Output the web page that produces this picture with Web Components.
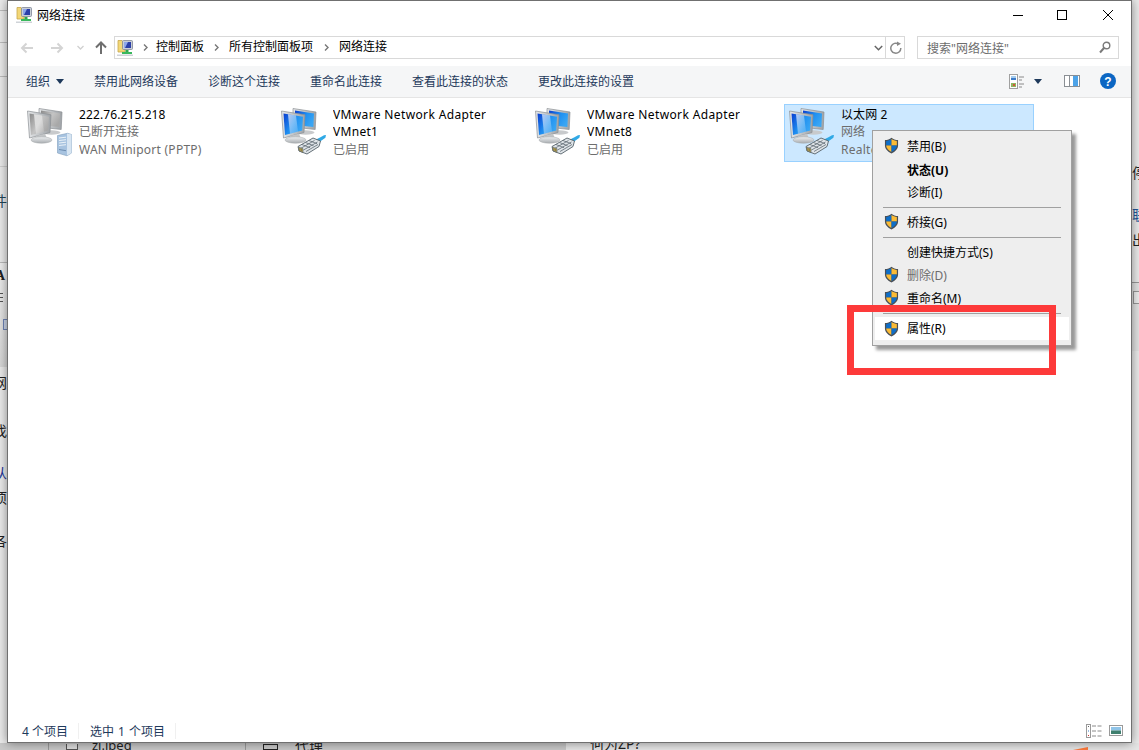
<!DOCTYPE html>
<html lang="zh-CN">
<head>
<meta charset="utf-8">
<title>网络连接</title>
<style>
html,body{margin:0;padding:0;width:1139px;height:750px;overflow:hidden;background:#ececec;font-family:"Noto Sans","Noto Sans CJK SC",sans-serif;font-size:12px}
</style>
</head>
<body>
<x-desktop>
  <x-window>
    <x-titlebar slot="title">网络连接</x-titlebar>
    <x-navbar slot="nav"></x-navbar>
    <x-toolbar slot="tools">
      <x-tool menu>组织</x-tool>
      <x-tool>禁用此网络设备</x-tool>
      <x-tool>诊断这个连接</x-tool>
      <x-tool>重命名此连接</x-tool>
      <x-tool>查看此连接的状态</x-tool>
      <x-tool>更改此连接的设置</x-tool>
    </x-toolbar>
    <x-conn-list slot="content">
      <x-conn kind="wan" name="222.76.215.218" l2="已断开连接" l3="WAN Miniport (PPTP)"></x-conn>
      <x-conn kind="lan" name="VMware Network Adapter VMnet1" l3="已启用"></x-conn>
      <x-conn kind="lan" name="VMware Network Adapter VMnet8" l3="已启用"></x-conn>
      <x-conn kind="lan" name="以太网 2" l2="网络" l3="Realtek PCIe GBE Family Controller" selected></x-conn>
    </x-conn-list>
    <x-statusbar slot="status"></x-statusbar>
  </x-window>
  <x-context-menu>
    <x-menu-item shield>禁用(B)</x-menu-item>
    <x-menu-item bold>状态(U)</x-menu-item>
    <x-menu-item>诊断(I)</x-menu-item>
    <x-menu-sep></x-menu-sep>
    <x-menu-item shield>桥接(G)</x-menu-item>
    <x-menu-sep></x-menu-sep>
    <x-menu-item>创建快捷方式(S)</x-menu-item>
    <x-menu-item shield disabled>删除(D)</x-menu-item>
    <x-menu-item shield>重命名(M)</x-menu-item>
    <x-menu-sep></x-menu-sep>
    <x-menu-item shield hot>属性(R)</x-menu-item>
  </x-context-menu>
  <x-redbox></x-redbox>
</x-desktop>

<script>
const SHIELD = `<svg width="15" height="17" viewBox="0 0 16 18" style="display:block">
<path d="M8 .6C6 2.300 3.800 3 1 3.100V9c0 3.800 3 6.500 7 8.400 4-1.900 7-4.600 7-8.400V3.100C12.200 3 10 2.300 8 .6Z" fill="#4a4f55"/>
<path d="M8 2.100C6.300 3.400 4.400 4 2.300 4.200V9H8Z" fill="#0e6ec8"/>
<path d="M8 2.100C9.700 3.400 11.600 4 13.700 4.200V9H8Z" fill="#fbbb35"/>
<path d="M2.300 9C2.500 12 4.800 14.300 8 15.900V9Z" fill="#fbbb35"/>
<path d="M13.700 9C13.500 12 11.200 14.300 8 15.900V9Z" fill="#0e6ec8"/></svg>`;

const FOLDER16 = `<svg width="18" height="18" viewBox="0 0 18 18" style="display:block">
<path d="M1 1.500h4l1 1.500h2v10H1Z" fill="#f3d777" stroke="#c6a74d" stroke-width=".8"/>
<rect x="5.500" y="1.500" width="10" height="9" rx="1" fill="#c9ced6" stroke="#7f8796" stroke-width=".8"/>
<rect x="7" y="3" width="7" height="6" fill="#2b3fa8"/><path d="M7 3h4L8 9H7Z" fill="#8ea7ea"/>
<rect x="8.500" y="11" width="3" height="2.500" fill="#2fa84f"/>
<rect x="5" y="13" width="10" height="2" fill="#39b85c"/>
<rect x="0" y="15.500" width="16" height="1.500" fill="#cfd3d8"/></svg>`;

function netIcon(kind,uid){
  const grey = kind==='wan';
  const a = grey ? '#8a8a8a' : '#0a3dd0';
  const b = grey ? '#c4c4c4' : '#1f8ff0';
  const c = grey ? '#a8a8a8' : '#39a6f4';
  const defs = `<linearGradient id="${uid}a" x1="0" y1="0" x2="1" y2=".6"><stop offset="0" stop-color="${a}"/><stop offset=".55" stop-color="${b}"/><stop offset="1" stop-color="${c}"/></linearGradient>
  <linearGradient id="${uid}h" x1="0" y1="0" x2="1" y2="1"><stop offset="0" stop-color="#fff" stop-opacity=".95"/><stop offset="1" stop-color="#fff" stop-opacity=".15"/></linearGradient>
  <linearGradient id="${uid}f" x1="0" y1="0" x2="0" y2="1"><stop offset="0" stop-color="#eef0f2"/><stop offset="1" stop-color="#a9adb1"/></linearGradient>
  <linearGradient id="${uid}s" x1="0" y1="0" x2="1" y2="0"><stop offset="0" stop-color="#e6e8ea"/><stop offset="1" stop-color="#9ea2a6"/></linearGradient>`;
  const extra = grey
   ? `<path d="M33.500 28.500l10-2.200 4 1.200v18.500l-4.500 2.800-9.500-2.800Z" fill="#a7c3e0" stroke="#7f9dbc" stroke-width=".6"/>
      <path d="M43 26.500l4.500 1v18.500L43 48.500Z" fill="#d7e5f2"/>
      <path d="M35 31l7-.8M35 33.500l7-.8M35 36l7-.8M35 38.500l7-.8" stroke="#f2f7fb" stroke-width=".9"/>
      <path d="M35 42.500l7 1.200" stroke="#5e7fa3" stroke-width=".8"/>`
   : `<path d="M36 33.500l6-3 4-2.300 2-.2-.6 2.800-6 4.200Z" fill="#2fa9e6"/>
      <path d="M20 39.500l15-8.500 7.500 3L41 39.500 29 47l-8-3Z" fill="#dfe4e8" stroke="#56626a" stroke-width=".9"/>
      <path d="M24 37.500l8 3.200M27.500 35.500l8 3.200M31 33.500l8 3.200M22.500 41.500l14-8M25.500 43l14-8M28 44.500l12-7" stroke="#5f6b73" stroke-width=".8" fill="none"/>
      <path d="M20.500 40l4.500 1.700v3.800l-4-1.700Z" fill="#b7a45a" stroke="#56626a" stroke-width=".6"/>
      <path d="M22 41.200v2.500M23.500 41.800v2.500" stroke="#6d5f2a" stroke-width=".5"/>`;
  return `<svg width="48" height="50" viewBox="0 0 48 50" style="display:block"><defs>${defs}</defs>
    <ellipse cx="27.500" cy="25.500" rx="9" ry="2.200" fill="#c8cacc"/>
    <path d="M15 1.500l23 3.500-.8 17.500-22-2.500Z" fill="url(#${uid}s)" stroke="#8b8f93" stroke-width=".7"/>
    <path d="M17 3.500l19 3-.6 13.500-18.400-2Z" fill="url(#${uid}a)"/>
    <path d="M3.500 4l23.500 3.800-1 17.700L5.500 31Z" fill="url(#${uid}s)" stroke="#8b8f93" stroke-width=".7"/>
    <path d="M5.500 6.500l19.500 3.200-.8 13.800L7 28Z" fill="url(#${uid}a)"/>
    <path d="M10 7.200l8 1.300L20 24.700 12 26.800Z" fill="url(#${uid}h)" opacity=".75"/>
    <path d="M12 29l9-2.200 1.500 3.500h-10Z" fill="#c2c5c7"/>
    <ellipse cx="17.500" cy="33" rx="10.500" ry="3.200" fill="url(#${uid}f)" stroke="#a5a8aa" stroke-width=".5"/>
    ${extra}</svg>`;
}

class Base extends HTMLElement{
  constructor(){super();this.attachShadow({mode:'open'});}
}
let uidN=0;

customElements.define('x-desktop',class extends Base{
  connectedCallback(){
    this.shadowRoot.innerHTML=`<style>
    :host{display:block;position:relative;width:1139px;height:750px;overflow:hidden;background:#ececec;font-family:"Noto Sans","Noto Sans CJK SC",sans-serif;font-size:12px}
    .bg{position:absolute;color:#222;font-size:14px;line-height:16px;white-space:nowrap}
    .ln{position:absolute;background:#bdbdbd}
    .panel{position:absolute;left:0;top:262px;width:7px;height:104px;background:linear-gradient(#f0f0f0,#d8d8d8);border-top:1px solid #bbb}
    .rp{position:absolute;left:1132px;top:282px;width:7px;height:68px;background:#e4e4e4;border-top:1px solid #9a9a9a}
    .strip{position:absolute;top:743px;height:7px;overflow:hidden}
    .strip .bg{top:-6px}
    </style>
    <div class="ln" style="left:0;top:10px;width:7px;height:1px"></div>
    <div class="ln" style="left:0;top:42px;width:7px;height:1px"></div>
    <div class="ln" style="left:0;top:76px;width:7px;height:1px"></div>
    <div class="ln" style="left:0;top:166px;width:7px;height:1px;background:#d0d0d0"></div>
    <div class="panel"></div><div class="rp"></div>
    <div class="ln" style="left:0;top:293px;width:3px;height:1px;background:#555"></div>
    <div class="ln" style="left:0;top:297px;width:3px;height:1px;background:#555"></div>
    <div class="ln" style="left:0;top:301px;width:3px;height:1px;background:#555"></div>
    <div class="ln" style="left:3px;top:319px;width:4px;height:11px;background:#cdd7ea;border:1px solid #6f86b8;border-right:0;box-sizing:border-box"></div>
    <div class="ln" style="left:1133px;top:291px;width:6px;height:13px;background:#efefef;border:1px solid #9a9a9a;border-right:0;box-sizing:border-box"></div>
    <div class="strip" style="left:0;width:566px;background:#c9c9c9">
      <div class="ln" style="left:48px;top:0;width:1px;height:7px;background:#9a9a9a"></div>
      <div class="ln" style="left:245px;top:0;width:1px;height:7px;background:#9a9a9a"></div>
      <div class="ln" style="left:66px;top:1px;width:12px;height:6px;border:1px solid #555;border-top:0;background:#ddd;box-sizing:border-box"></div>
      <div class="ln" style="left:263px;top:1px;width:15px;height:6px;border:1px solid #222;background:none;box-sizing:border-box"></div>
      <span class="bg" style="left:92px;font-size:13px">zj.jpeg</span>
      <span class="bg" style="left:295px;top:-5px">代理</span>
    </div>
    <div class="strip" style="left:566px;width:573px;background:#e6e6e6">
      <span class="bg" style="left:24px;top:-7px">何为ZP?</span>
      <div class="ln" style="left:507px;top:4px;width:15px;height:3px;background:#ff7a3c;clip-path:polygon(0 100%,100% 0,100% 100%)"></div>
    </div>
    <span class="bg" style="left:-7px;top:193px;color:#245">件</span>
    <span class="bg" style="left:-5px;top:268px;font-family:'Liberation Serif',serif;font-weight:bold">A</span>
    <span class="bg" style="left:-7px;top:375px">网</span>
    <span class="bg" style="left:-7px;top:423px">找</span>
    <span class="bg" style="left:-7px;top:465px;color:#239">从</span>
    <span class="bg" style="left:-7px;top:490px">项</span>
    <span class="bg" style="left:-7px;top:533px">各</span>
    <span class="bg" style="left:1132px;top:165px">停</span>
    <span class="bg" style="left:1132px;top:207px;color:#259">联</span>
    <span class="bg" style="left:1132px;top:232px">出</span>
    <slot></slot>`;
  }
});

customElements.define('x-window',class extends Base{
  connectedCallback(){
    this.shadowRoot.innerHTML=`<style>
    :host{display:flex;flex-direction:column;position:absolute;left:7px;top:0;width:1123px;height:741px;background:#fff;border:1px solid #707070;box-shadow:0 0 10px rgba(0,0,0,.45);color:#000}
    .c{flex:1;min-height:0;display:block}
    </style>
    <slot name="title"></slot><slot name="nav"></slot><slot name="tools"></slot>
    <div class="c"><slot name="content"></slot></div>
    <slot name="status"></slot>`;
  }
});

customElements.define('x-titlebar',class extends Base{
  connectedCallback(){
    this.shadowRoot.innerHTML=`<style>
    :host{display:flex;align-items:center;height:31px;flex:none;padding-left:8px;font-size:12px}
    .t{margin-left:3px;flex:1;margin-top:-4px}
    .i{margin-top:-3px}
    .b{width:45px;height:31px;display:flex;align-items:center;justify-content:center}
    .b svg{margin-top:-3px}
    .r{display:flex;margin-right:1px}
    .b.m{margin-right:1px;width:44px}
    </style>
    <span class="i">${FOLDER16}</span><span class="t"><slot></slot></span>
    <div class="r">
     <div class="b"><svg width="12" height="12" viewBox="0 0 12 12"><path d="M1 6.500h10" stroke="#000"/></svg></div>
     <div class="b m"><svg width="12" height="12" viewBox="0 0 12 12"><rect x="1.500" y="1.500" width="9" height="9" fill="none" stroke="#000"/></svg></div>
     <div class="b"><svg width="12" height="12" viewBox="0 0 12 12"><path d="M1 1l10 10M11 1L1 11" stroke="#000" fill="none"/></svg></div>
    </div>`;
  }
});

customElements.define('x-navbar',class extends Base{
  connectedCallback(){
    const chev=(c='')=>`<svg class="ch ${c}" width="7" height="9" viewBox="0 0 7 9"><path d="M2 1.500l3 3-3 3" fill="none" stroke="#777" stroke-width="1.400"/></svg>`;
    this.shadowRoot.innerHTML=`<style>
    :host{display:flex;align-items:center;height:34px;flex:none;box-sizing:border-box;padding:0 12px 3px 11px;font-size:12px}
    .nav{display:flex;align-items:center;width:95px;flex:none;height:22px}
    .nav svg{display:block}
    .addr{width:791px;height:23px;box-sizing:border-box;border:1px solid #d9d9d9;display:flex;align-items:center;flex:none;padding-left:2px}
    .addr .crumb{white-space:nowrap;margin-top:-3px}
    .ch{margin:0 9px;flex:none}
    .ch.f{margin:0 7px}
    .ch.l{margin:0 9px 0 10px}
    .sp{flex:1}
    .dd{width:12px;display:flex;justify-content:center}
    .sep{width:1px;height:21px;background:#d9d9d9;margin:0 1px 0 1px}
    .ref{width:17px;display:flex;justify-content:center}
    .search{margin-left:12px;flex:1;height:23px;box-sizing:border-box;border:1px solid #d9d9d9;display:flex;align-items:center;padding:0 7px 0 9px;color:#6d6d6d}
    </style>
    <div class="nav">
      <svg style="margin-left:1px" width="14" height="12" viewBox="0 0 14 12"><path d="M13 6H2M6.500 1.500L2 6l4.500 4.500" fill="none" stroke="#d4d4d4" stroke-width="2"/></svg>
      <svg style="margin-left:16px" width="14" height="12" viewBox="0 0 14 12"><path d="M1 6h11M7.500 1.500L12 6l-4.500 4.500" fill="none" stroke="#d4d4d4" stroke-width="2"/></svg>
      <svg style="margin-left:13px" width="7" height="5" viewBox="0 0 7 5"><path d="M.5 1l3 3 3-3" fill="none" stroke="#d0d0d0" stroke-width="1.300"/></svg>
      <svg style="margin-left:11px" width="12" height="14" viewBox="0 0 12 14"><path d="M6 13V2M1 6.500L6 1.500l5 5" fill="none" stroke="#6e6e6e" stroke-width="2"/></svg>
    </div>
    <div class="addr">
      ${FOLDER16}${chev('f')}<span class="crumb">控制面板</span>${chev()}<span class="crumb">所有控制面板项</span>${chev('l')}<span class="crumb">网络连接</span>
      <span class="sp"></span>
      <span class="dd"><svg width="9" height="6" viewBox="0 0 9 6"><path d="M.8 1l3.700 3.700L8.200 1" fill="none" stroke="#666" stroke-width="1.500"/></svg></span>
      <span class="sep"></span>
      <span class="ref"><svg width="12" height="13" viewBox="0 0 12 13"><path d="M8.700 3.100A5 5 0 1 0 10.800 7" fill="none" stroke="#888" stroke-width="1.500"/><path d="M5.500 .5v4.500l4-2.200Z" fill="#888" transform="translate(1.500 0)"/></svg></span>
    </div>
    <div class="search"><span style="flex:1">搜索"网络连接"</span>
      <svg width="12" height="13" viewBox="0 0 12 13"><circle cx="7.500" cy="4.500" r="3.300" fill="none" stroke="#7a7a7a" stroke-width="1.400"/><path d="M5 7L1 11.500" stroke="#7a7a7a" stroke-width="2"/></svg>
    </div>`;
  }
});

customElements.define('x-toolbar',class extends Base{
  connectedCallback(){
    this.shadowRoot.innerHTML=`<style>
    :host{display:flex;align-items:center;height:32px;flex:none;box-sizing:border-box;background:#f5f6f7;border-bottom:1px solid #e5e5e5;padding-left:3px;padding-right:15px}
    .sp{flex:1}
    svg{display:block}
    .r{display:flex;align-items:center;margin-top:-1px}
    </style><slot></slot><span class="sp"></span>
    <div class="r">
      <svg width="16" height="15" viewBox="0 0 16 15"><rect x=".5" y=".5" width="8" height="14" fill="#fff" stroke="#a0a0a0"/><rect x="2" y="2" width="5" height="4" fill="#3d7cc9"/><rect x="2" y="2" width="5" height="2" fill="#a6cdee"/><rect x="2" y="9" width="5" height="4" fill="#8fb560"/><rect x="4" y="10" width="2" height="2" fill="#d05a3a"/><path d="M10 3h5M10 6h3M10 10h5M10 13h3" stroke="#8a8a8a"/></svg>
      <svg style="margin-left:9px;margin-right:22px" width="8" height="5" viewBox="0 0 8 5"><path d="M0 0h8L4 5Z" fill="#1e395b"/></svg>
      <svg style="margin-right:20px" width="16" height="12" viewBox="0 0 16 12"><rect x=".5" y=".5" width="15" height="11" fill="#fff" stroke="#8a8f94"/><rect x="5" y="1" width="1" height="10" fill="#8a8f94"/><rect x="9" y="1" width="5" height="10" fill="#4da3e8"/></svg>
      <svg width="16" height="16" viewBox="0 0 16 16"><circle cx="8" cy="8" r="8" fill="#0b66c3"/><text x="8" y="12.500" text-anchor="middle" font-family="Liberation Sans" font-weight="700" font-size="12" fill="#fff">?</text></svg>
    </div>`;
  }
});

customElements.define('x-tool',class extends Base{
  connectedCallback(){
    const m=this.hasAttribute('menu');
    this.shadowRoot.innerHTML=`<style>
    :host{display:flex;align-items:center;padding:0 15px 1px;color:#1e395b;font-size:12px;white-space:nowrap;height:31px;box-sizing:border-box}
    svg{margin-left:6px;display:block}
    </style><slot></slot>${m?'<svg width="8" height="5" viewBox="0 0 8 5"><path d="M0 0h8L4 5Z" fill="#1e395b"/></svg>':''}`;
  }
});

customElements.define('x-conn-list',class extends Base{
  connectedCallback(){
    this.shadowRoot.innerHTML=`<style>
    :host{display:grid;grid-template-columns:repeat(4,250px);column-gap:4px;padding:6px 0 0 14px;align-items:start}
    </style><slot></slot>`;
  }
});

customElements.define('x-conn',class extends Base{
  connectedCallback(){
    const a=n=>this.getAttribute(n);
    const uid='g'+(++uidN);
    const nm=a('name');
    const m=nm.match(/^(VMware Network Adapter) (.*)$/);
    const lines = m
      ? `<div class="n" style="letter-spacing:.36px">${m[1]}</div><div class="n" style="letter-spacing:.3px">${m[2]}</div><div class="s">${a('l3')}</div>`
      : `<div class="n" style="letter-spacing:.1px">${nm}</div><div class="s">${a('l2')}</div><div class="s" style="letter-spacing:.26px">${a('l3')}</div>`;
    this.shadowRoot.innerHTML=`<style>
    :host{display:flex;height:58px;box-sizing:border-box;border:1px solid transparent;font-size:12px;padding:2px 0 0 2px;overflow:hidden}
    :host([selected]){background:#cce8ff;border-color:#99d1ff}
    .i{flex:none;width:48px;height:50px;margin:0 7px 0 -1px}
    .t{line-height:17.300px;white-space:nowrap;overflow:hidden;margin-top:-1px}
    .s{color:#6d6d6d}
    .n{color:#000}
    </style><div class="i">${netIcon(a('kind'),uid)}</div><div class="t">${lines}</div>`;
  }
});

customElements.define('x-statusbar',class extends Base{
  connectedCallback(){
    this.shadowRoot.innerHTML=`<style>
    :host{display:flex;align-items:center;height:23px;flex:none;box-sizing:border-box;padding:0 8px 0 14px;color:#1e395b;font-size:12px}
    .sep{width:1px;height:16px;background:#f0f0f0;margin:0 10px}
    .sp{flex:1}
    svg{display:block}
    .w{word-spacing:1px;margin-left:1px}
    </style><span>4 个项目</span><span class="sep"></span><span class="w">选中 1 个项目</span><span class="sep"></span><span class="sp"></span>
    <svg width="16" height="14" viewBox="0 0 16 14"><rect x=".5" y=".5" width="4" height="13" fill="#fff" stroke="#9a9a9a"/><rect x="2" y="2" width="1" height="1" fill="#666"/><rect x="2" y="6.500" width="1" height="1" fill="#3a7fc9"/><rect x="2" y="11" width="1" height="1" fill="#c33"/><path d="M6 2h4M11.500 2h4M6 7h4M11.500 7h4M6 12h4M11.500 12h4" stroke="#8a8a8a"/></svg>
    <svg style="margin-left:7px" width="14" height="11" viewBox="0 0 14 11"><rect x=".5" y=".5" width="13" height="10" fill="#fff" stroke="#9a9a9a"/><rect x="2" y="2" width="10" height="3.500" fill="#8fc4e8"/><rect x="2" y="5.500" width="10" height="3.500" fill="#3f7f6e"/></svg>`;
  }
});

customElements.define('x-context-menu',class extends Base{
  connectedCallback(){
    this.shadowRoot.innerHTML=`<style>
    :host{display:block;position:absolute;left:872px;top:130px;width:200px;height:216px;box-sizing:border-box;background:#eee;border:1px solid #a0a0a0;padding:3px 2px 2px;box-shadow:4px 4px 3px rgba(0,0,0,.4);font-size:12px}
    </style><slot></slot>`;
  }
});

customElements.define('x-menu-item',class extends Base{
  connectedCallback(){
    this.shadowRoot.innerHTML=`<style>
    :host{display:flex;align-items:center;height:23px;color:#000;white-space:nowrap;position:relative;padding-left:32px;box-sizing:border-box}
    :host([bold]){font-weight:700;padding-top:2px}
    :host([disabled]){color:#6d6d6d}
    :host([hot]){background:#fff;margin-top:1px;padding-bottom:2px}
    .i{position:absolute;left:9px;top:3px}
    </style>${this.hasAttribute('shield')?`<span class="i">${SHIELD}</span>`:''}<slot></slot>`;
  }
});

customElements.define('x-menu-sep',class extends Base{
  connectedCallback(){
    this.shadowRoot.innerHTML=`<style>
    :host{display:flex;align-items:center;height:7px;box-sizing:border-box;padding:2px 8px 0 8px}
    i{display:block;flex:1;height:1px;background:#a0a0a0}
    </style><i></i>`;
  }
});

customElements.define('x-redbox',class extends Base{
  connectedCallback(){
    this.shadowRoot.innerHTML=`<style>
    :host{display:block;position:absolute;left:847px;top:305px;width:209px;height:70px;box-sizing:border-box;border:7px solid #fd3a3a}
    </style>`;
  }
});
</script>
</body>
</html>
